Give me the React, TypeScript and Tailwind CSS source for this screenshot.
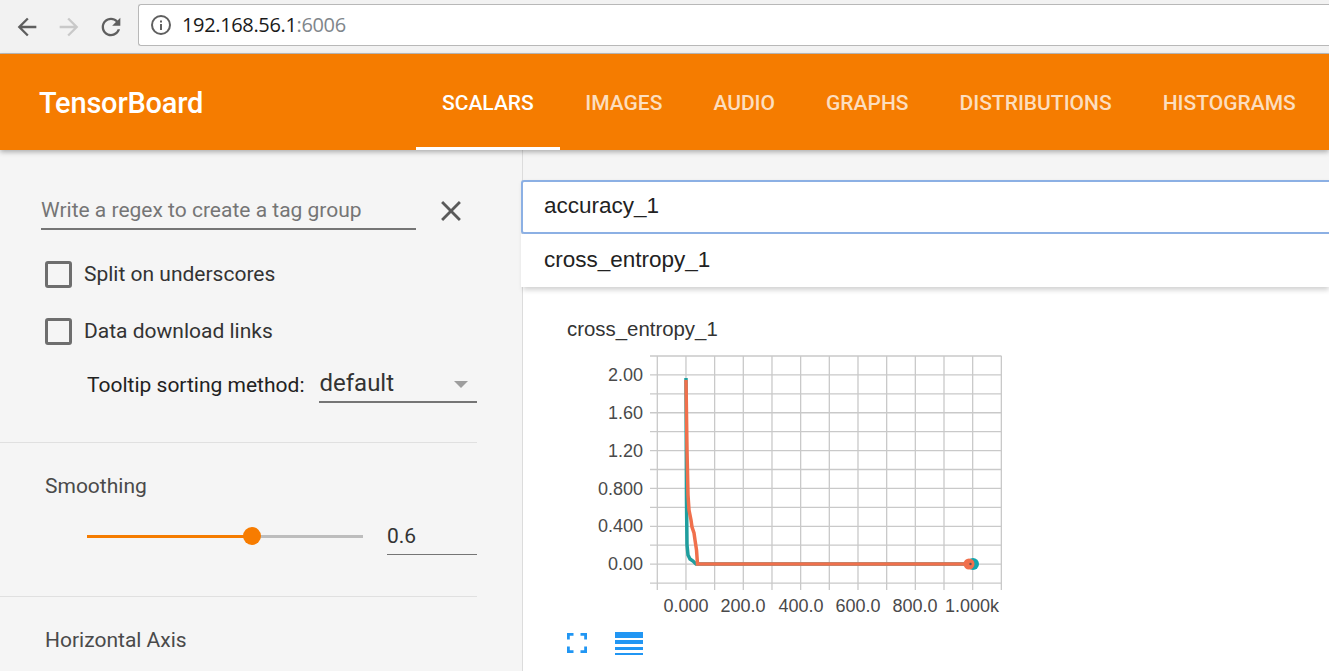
const tabs = ["SCALARS", "IMAGES", "AUDIO", "GRAPHS", "DISTRIBUTIONS", "HISTOGRAMS"];

const yLabels: [string, number][] = [
  ["2.00", 375],
  ["1.60", 413],
  ["1.20", 451],
  ["0.800", 489],
  ["0.400", 526],
  ["0.00", 564],
];

const xLabels: [string, number][] = [
  ["0.000", 686],
  ["200.0", 743],
  ["400.0", 801],
  ["600.0", 858],
  ["800.0", 915],
  ["1.000k", 972],
];

function Chart() {
  // viewBox x=0 is page x=600, y=0 is page y=350
  const vLines = Array.from({ length: 13 }, (_, i) => 57.3 + i * 28.67);
  const hLines = Array.from({ length: 13 }, (_, i) => 6 + i * 18.92);
  return (
    <svg width="430" height="270" viewBox="-10 0 430 270" className="block">
      {vLines.map((x) => (
        <line key={x} x1={x} y1="6" x2={x} y2="240" stroke="#c9c9c9" strokeWidth="1.3" />
      ))}
      {hLines.map((y) => (
        <line key={y} x1="50" y1={y} x2="401.5" y2={y} stroke="#c9c9c9" strokeWidth="1.3" />
      ))}
      {yLabels.map(([t, y]) => (
        <text key={t} x="43" y={y - 350 + 6} textAnchor="end" fontSize="18" fill="#4a4a4a" fontFamily="'Liberation Sans', sans-serif">
          {t}
        </text>
      ))}
      {xLabels.map(([t, x]) => (
        <text key={t} x={x - 600} y="262" textAnchor="middle" fontSize="18" fill="#4a4a4a" fontFamily="'Liberation Sans', sans-serif">
          {t}
        </text>
      ))}
      <polyline
        points="86,28 86.5,150 87,195 88,205 90,209 93,211 95,213 96,214 372,214"
        fill="none"
        stroke="#1f9e9e"
        strokeWidth="3.5"
      />
      <circle cx="373" cy="214" r="6" fill="#12a5ad" />
      <polyline
        points="86,30 87,100 88,145 89,160 91,170 92,177 94,183 95,190 96.5,200 97.5,214 368,214"
        fill="none"
        stroke="#f0704c"
        strokeWidth="3.5"
      />
      <circle cx="369" cy="214" r="5.5" fill="#f0704c" />
      <circle cx="370.5" cy="214" r="1.2" fill="#555" />
    </svg>
  );
}

export default function App() {
  return (
    <div className="h-[671px] w-[1329px] overflow-hidden bg-white flex flex-col font-['Roboto',sans-serif]">
      {/* Browser bar */}
      <div className="h-[54px] shrink-0 bg-[#f2f2f2] border-b border-[#bdbdbd] flex items-center pl-[13px] pr-0">
        <svg width="28" height="28" viewBox="0 0 24 24" fill="#5f5f5f" className="shrink-0">
          <path d="M20 11H7.83l5.59-5.59L12 4l-8 8 8 8 1.41-1.41L7.83 13H20v-2z" />
        </svg>
        <svg width="28" height="28" viewBox="0 0 24 24" fill="#c9c9c9" className="shrink-0 ml-[14px]">
          <path d="M12 4l-1.41 1.41L16.17 11H4v2h12.17l-5.58 5.59L12 20l8-8z" />
        </svg>
        <svg width="28" height="28" viewBox="0 0 24 24" fill="#5f5f5f" className="shrink-0 ml-[14px]">
          <path d="M17.65 6.35C16.2 4.9 14.21 4 12 4c-4.42 0-7.99 3.58-7.99 8s3.57 8 7.99 8c3.73 0 6.84-2.55 7.73-6h-2.08c-.82 2.33-3.04 4-5.65 4-3.31 0-6-2.69-6-6s2.69-6 6-6c1.66 0 3.14.69 4.22 1.78L13 11h7V4l-2.35 2.35z" />
        </svg>
        <div className="ml-[13px] h-[42px] mb-[3px] flex-1 bg-white border border-[#b8b8b8] border-r-0 rounded-l-[3px] flex items-center pl-[11px] font-['Open_Sans',sans-serif] text-[20px]">
          <svg width="22" height="22" viewBox="0 0 22 22" className="shrink-0">
            <circle cx="11" cy="11" r="9" fill="none" stroke="#5f5f5f" strokeWidth="2" />
            <rect x="10" y="10" width="2" height="6" fill="#5f5f5f" />
            <rect x="10" y="6.5" width="2" height="2" fill="#5f5f5f" />
          </svg>
          <span className="ml-[10px] text-[#1a1a1a] tracking-[-0.35px]">192.168.56.1</span>
          <span className="text-[#80868b] tracking-[-0.35px]">:6006</span>
        </div>
      </div>

      {/* TensorBoard header */}
      <header className="h-[96px] shrink-0 bg-[#f57c00] flex items-stretch pl-[39px] shadow-[0_2px_5px_rgba(0,0,0,0.3)] relative z-10">
        <div className="w-[377px] flex items-center pt-[4px] text-white text-[29px] font-medium tracking-[-0.2px]">TensorBoard</div>
        <nav className="flex">
          {tabs.map((t, i) => (
            <div
              key={t}
              className={
                i === 0
                  ? "px-[26px] flex items-center text-[21px] font-medium text-white border-b-[3px] border-white pt-[7px]"
                  : "px-[25.5px] flex items-center text-[21px] font-medium text-white/75 border-b-[3px] border-transparent pt-[7px]"
              }
            >
              {t}
            </div>
          ))}
        </nav>
      </header>

      <div className="flex flex-1 min-h-0">
        {/* Sidebar */}
        <aside className="w-[523px] shrink-0 bg-[#f5f5f5] border-r border-[#dcdcdc] text-[21px] leading-[30px]">
          <div className="w-[477px] h-[293px] border-b border-[#e0e0e0]">
            <div className="flex items-center pl-[41px] pt-[42px]">
              <div className="w-[375px] h-[38px] border-b-2 border-[#757575] text-[#757575] leading-[36px]">
                Write a regex to create a tag group
              </div>
              <svg width="34" height="34" viewBox="0 0 24 24" fill="#5a5a5a" className="ml-[18px]">
                <path d="M19 6.41L17.59 5 12 10.59 6.41 5 5 6.41 10.59 12 5 17.59 6.41 19 12 13.41 17.59 19 19 17.59 13.41 12z" />
              </svg>
            </div>
            <div className="flex items-center pl-[45px] mt-[29px]">
              <div className="w-[27px] h-[27px] border-[3px] border-[#6e6e6e] rounded-[3px]" />
              <span className="ml-[12px] text-[#333]">Split on underscores</span>
            </div>
            <div className="flex items-center pl-[45px] mt-[27px]">
              <div className="w-[27px] h-[27px] border-[3px] border-[#6e6e6e] rounded-[3px]" />
              <span className="ml-[12px] text-[#333]">Data download links</span>
            </div>
            <div className="flex items-start pl-[87px] mt-[13px]">
              <span className="text-[#212121] mt-[11px] whitespace-nowrap">Tooltip sorting method:</span>
              <div className="ml-[15px] w-[158px] shrink-0 h-[44px] border-b-2 border-[#757575] flex items-center justify-between pr-[9px] pt-[6px] text-[24px] text-[#333]">
                <span>default</span>
                <div className="w-0 h-0 border-l-[7px] border-r-[7px] border-t-[7px] border-l-transparent border-r-transparent border-t-[#9e9e9e] mt-[2px]" />
              </div>
            </div>
          </div>
          <div className="w-[477px] h-[154px] border-b border-[#e0e0e0] pl-[45px] pt-[30px]">
            <div className="text-[#4a4a4a] leading-[26px]">Smoothing</div>
            <div className="flex items-center pl-[42px] mt-[19px]">
              <div className="w-[276px] h-[3px] bg-[#bdbdbd] relative">
                <div className="h-[3px] w-[165px] bg-[#f57c00]" />
                <div className="absolute left-[156px] top-[-7.5px] w-[18px] h-[18px] rounded-full bg-[#f77c00]" />
              </div>
              <div className="ml-[24px] w-[90px] h-[36px] border-b border-[#757575] text-[#333] leading-[34px] translate-y-[1px]">0.6</div>
            </div>
          </div>
          <div className="pl-[45px] pt-[30px] text-[#4a4a4a] leading-[26px]">Horizontal Axis</div>
        </aside>

        {/* Main */}
        <main className="flex-1 min-w-0 pt-[30px] bg-[#f5f5f5] font-['Liberation_Sans',sans-serif]">
          <div className="bg-white h-full">
            <div className="relative z-[1] shadow-[0_3px_5px_rgba(0,0,0,0.18)]">
              <div className="h-[54px] border-2 border-r-0 border-[#8cb0e4] rounded-l-[3px] flex items-center pl-[21px] pb-[2px] text-[22.5px] text-[#222] -ml-[2px]">
                accuracy_1
              </div>
              <div className="h-[53px] bg-white flex items-center pl-[23px] pb-[2px] text-[22.5px] text-[#222] -ml-[2px]">cross_entropy_1</div>
            </div>
            <div className="pl-[44px] pt-[29px] text-[20.4px] text-[#333] leading-[26px]">cross_entropy_1</div>
            <div className="ml-[67px] mt-[8px]">
              <Chart />
            </div>
            <div className="flex items-center pl-[42px] mt-[11px] gap-[26px]">
              <svg width="24" height="24" viewBox="0 0 24 24" fill="#2196f3">
                <path d="M2 2h6.500v2.800H4.800V8.500H2zM15.500 2H22v6.500h-2.800V4.800h-3.700zM2 15.500h2.800v3.700h3.700V22H2zM19.200 15.500H22V22h-6.500v-2.800h3.700z" />
              </svg>
              <div className="w-[28px] flex flex-col">
                <div className="h-[6px] bg-[#2196f3]" />
                <div className="h-[4px] mt-[2px] bg-[#2196f3]" />
                <div className="h-[3px] mt-[3px] bg-[#2196f3]" />
                <div className="h-[2px] mt-[3px] bg-[#2196f3]" />
              </div>
            </div>
          </div>
        </main>
      </div>
    </div>
  );
}
